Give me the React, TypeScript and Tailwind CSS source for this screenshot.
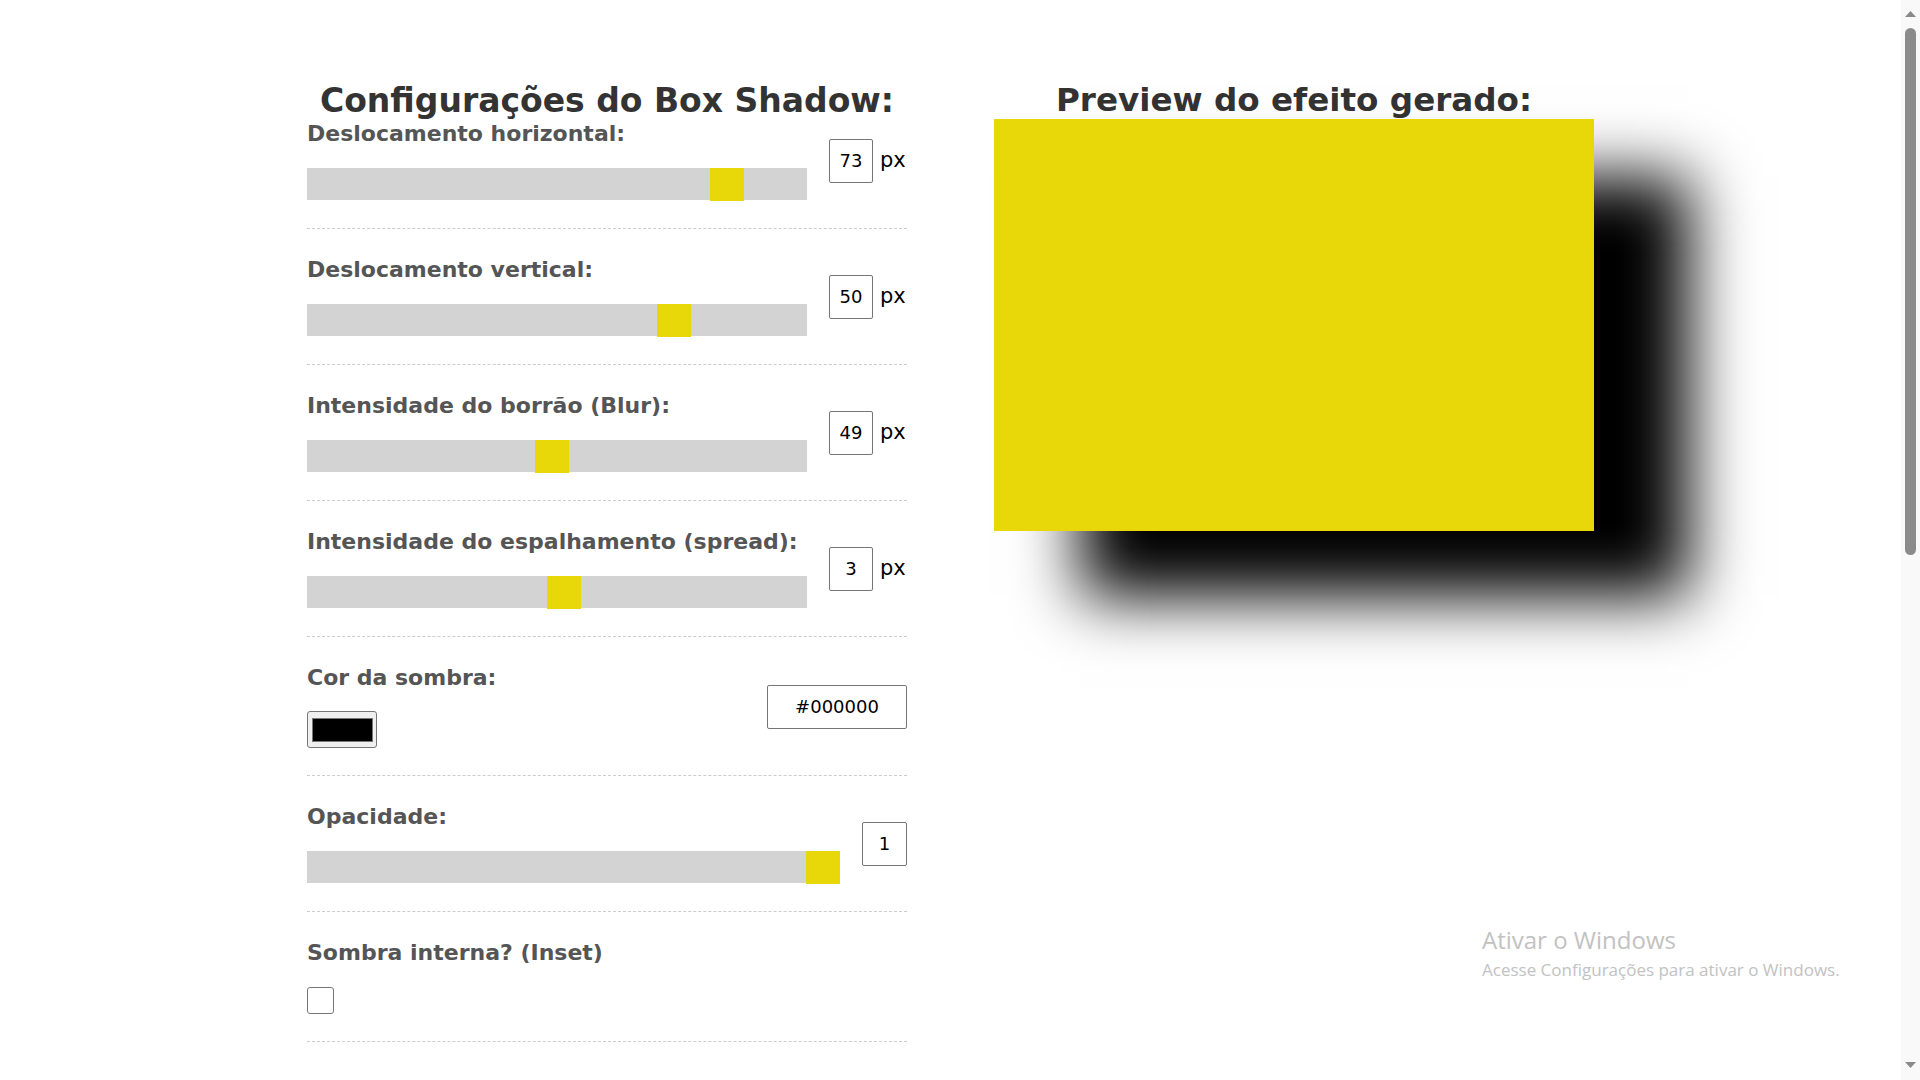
import React from 'react';

type SliderRow = {
  label: string;
  value: number;
  min: number;
  max: number;
};

const sliders: SliderRow[] = [
  { label: 'Deslocamento horizontal:', value: 73, min: -100, max: 100 },
  { label: 'Deslocamento vertical:', value: 50, min: -100, max: 100 },
  { label: 'Intensidade do borrão (Blur):', value: 49, min: 0, max: 100 },
  { label: 'Intensidade do espalhamento (spread):', value: 3, min: -100, max: 100 },
];

const Track = ({ value, min, max }: { value: number; min: number; max: number }) => {
  const frac = (value - min) / (max - min);
  return (
    <div className="relative mt-[21px] h-[32px] w-full bg-[#d3d3d3]">
      <div
        className="absolute top-0 h-[33px] w-[34px] bg-[#e8d709]"
        style={{ left: `calc((100% - 34px) * ${frac})` }}
      />
    </div>
  );
};

const Label = ({ children }: { children: React.ReactNode }) => (
  <label className="block text-[22px] leading-[26px] font-bold text-[#555]">{children}</label>
);

const App: React.FC = () => {
  return (
    <div className="flex h-screen overflow-hidden bg-white font-['DejaVu_Sans',sans-serif]">
      <div className="relative flex-1">
        <div className="flex justify-center gap-[87px] pt-[80px]">
          {/* Configurações */}
          <div className="w-[600px]">
            <h1 className="text-center text-[33px] leading-[41px] font-bold text-[#333]">
              Configurações do Box Shadow:
            </h1>

            {sliders.map((s, i) => (
              <div
                key={s.label}
                className={`flex items-center gap-[22px] border-b border-dashed border-[#ccc] pb-[28px] ${i === 0 ? 'pt-0' : 'pt-[28px]'}`}
              >
                <div className="flex-1">
                  <Label>{s.label}</Label>
                  <Track value={s.value} min={s.min} max={s.max} />
                </div>
                <div className="flex items-center gap-[7px]">
                  <input
                    readOnly
                    value={s.value}
                    className="h-[44px] w-[44px] rounded-[2px] border border-[#767676] text-center text-[18px] text-black outline-none"
                  />
                  <span className="w-[27px] text-[21px] text-black">px</span>
                </div>
              </div>
            ))}

            {/* Cor */}
            <div className="flex items-center justify-between border-b border-dashed border-[#ccc] pt-[28px] pb-[27px]">
              <div>
                <Label>Cor da sombra:</Label>
                <div className="mt-[20px] flex h-[37px] w-[70px] items-center justify-center rounded-[3px] border border-[#767676] bg-[#efefef]">
                  <div className="h-[24px] w-[61px] border border-[#777] bg-black" />
                </div>
              </div>
              <input
                readOnly
                value="#000000"
                className="h-[44px] w-[140px] rounded-[2px] border border-[#767676] text-center text-[18px] text-black outline-none"
              />
            </div>

            {/* Opacidade */}
            <div className="flex items-center gap-[22px] border-b border-dashed border-[#ccc] pt-[28px] pb-[28px]">
              <div className="flex-1">
                <Label>Opacidade:</Label>
                <Track value={1} min={0} max={1} />
              </div>
              <input
                readOnly
                value="1"
                className="h-[44px] w-[45px] rounded-[2px] border border-[#767676] text-center text-[18px] text-black outline-none"
              />
            </div>

            {/* Inset */}
            <div className="border-b border-dashed border-[#ccc] pt-[28px] pb-[27px]">
              <Label>Sombra interna? (Inset)</Label>
              <div className="mt-[21px] h-[27px] w-[27px] rounded-[3px] border border-[#767676] bg-white" />
            </div>
          </div>

          {/* Preview */}
          <div className="flex w-[600px] flex-col items-center pt-[1px]">
            <h2 className="text-center text-[32.6px] leading-[38px] font-bold text-[#333]">
              Preview do efeito gerado:
            </h2>
            <div className="h-[412px] w-[600px] bg-[#e8d709] shadow-[91px_62px_61px_4px_#000]" />
          </div>
        </div>

        {/* marca d'água do Windows */}
        <div className="pointer-events-none absolute top-[924px] left-[1482px] font-['Open_Sans',sans-serif] text-[#c2c2c2]">
          <div className="text-[24px] leading-[32px]">Ativar o Windows</div>
          <div className="mt-[3px] text-[17px] leading-[22px]">Acesse Configurações para ativar o Windows.</div>
        </div>
      </div>

      {/* barra de rolagem */}
      <div className="flex h-screen w-[19px] flex-col items-center bg-[#f9f9f9]">
        <svg width="11" height="6" viewBox="0 0 11 6" className="mt-[11px]">
          <path d="M0 6 L5.5 0 L11 6 Z" fill="#8a8a8a" />
        </svg>
        <div className="mt-[11px] h-[527px] w-[11px] rounded-full bg-[#8b8b8b]" />
        <div className="flex-1" />
        <svg width="11" height="6" viewBox="0 0 11 6" className="mb-[12px]">
          <path d="M0 0 L11 0 L5.5 6 Z" fill="#8a8a8a" />
        </svg>
      </div>
    </div>
  );
};

export default App;
